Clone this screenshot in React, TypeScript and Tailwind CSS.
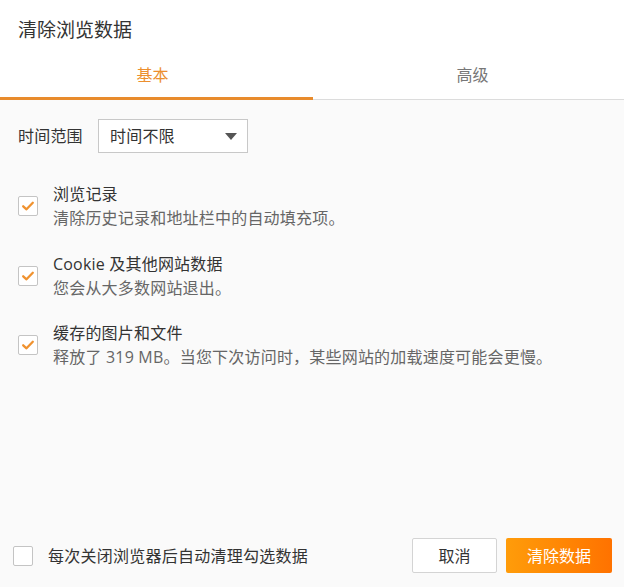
import React from "react";

const FONT = { fontFamily: '"Open Sans", "Noto Sans CJK SC", sans-serif' };

function Check({ checked }: { checked: boolean }) {
  return (
    <div className="w-[20px] h-[20px] shrink-0 rounded-[2px] border border-[#c4c4c4] bg-white flex items-center justify-center">
      {checked && (
        <svg width="14" height="14" viewBox="0 0 14 14">
          <path d="M2.2 7.3 L5.5 10.3 L11.8 3.8" fill="none" stroke="#f0922f" strokeWidth="2.3" strokeLinecap="round" strokeLinejoin="round" />
        </svg>
      )}
    </div>
  );
}

function Item({ title, desc, mt }: { title: string; desc: string; mt: string }) {
  return (
    <div className={`flex items-center pl-[18px] ${mt}`}>
      <Check checked />
      <div className="ml-[15px] text-[16px] leading-[24px] tracking-[0.2px]">
        <div className="text-[#333]">{title}</div>
        <div className="text-[#666]">{desc}</div>
      </div>
    </div>
  );
}

export default function App() {
  return (
    <div className="w-[624px] h-[587px] flex flex-col bg-[#fafafa] overflow-hidden" style={FONT}>
      <div className="bg-white">
        <div className="pl-[18px] pt-[17px] h-[56px] text-[19px] leading-[26px] text-[#333]">清除浏览数据</div>
        <div className="flex items-end h-[44px]">
          <div className="w-[313px] h-[44px] border-b-[3px] border-[#e88b2c] text-center text-[16px] leading-[22px] pt-[8px] pr-[8px] text-[#ec8f2f]">基本</div>
          <div className="flex-1 h-[44px] border-b border-[#dcdcdc] text-center text-[16px] leading-[22px] pt-[8px] pl-[8px] text-[#777]">高级</div>
        </div>
      </div>
      <div className="flex items-center pl-[18px] mt-[19px]">
        <span className="text-[16px] text-[#333] w-[80px] tracking-[0.2px]">时间范围</span>
        <div className="w-[150px] h-[34px] border border-[#c8c8c8] bg-white flex items-center justify-between pl-[11px] pr-[10px]">
          <span className="text-[16px] text-[#333] tracking-[0.2px]">时间不限</span>
          <svg width="12" height="7" viewBox="0 0 12 7">
            <path d="M0 0 L12 0 L6 7 Z" fill="#555" />
          </svg>
        </div>
      </div>
      <Item mt="mt-[29px]" title="浏览记录" desc="清除历史记录和地址栏中的自动填充项。" />
      <Item mt="mt-[22px]" title="Cookie 及其他网站数据" desc="您会从大多数网站退出。" />
      <Item mt="mt-[21px]" title="缓存的图片和文件" desc="释放了 319 MB。当您下次访问时，某些网站的加载速度可能会更慢。" />
      <div className="flex-1" />
      <div className="flex items-center pl-[13px] pr-[12px] pb-[14px]">
        <Check checked={false} />
        <span className="ml-[15px] text-[16px] text-[#333] tracking-[0.25px]">每次关闭浏览器后自动清理勾选数据</span>
        <div className="flex-1" />
        <button className="w-[85px] h-[35px] border border-[#d4d4d4] bg-white text-[16px] text-[#333] rounded-[2px]">取消</button>
        <button className="ml-[9px] w-[106px] h-[35px] rounded-[2px] bg-gradient-to-r from-[#ff9c0a] to-[#ff7200] text-[16px] text-white">清除数据</button>
      </div>
    </div>
  );
}
